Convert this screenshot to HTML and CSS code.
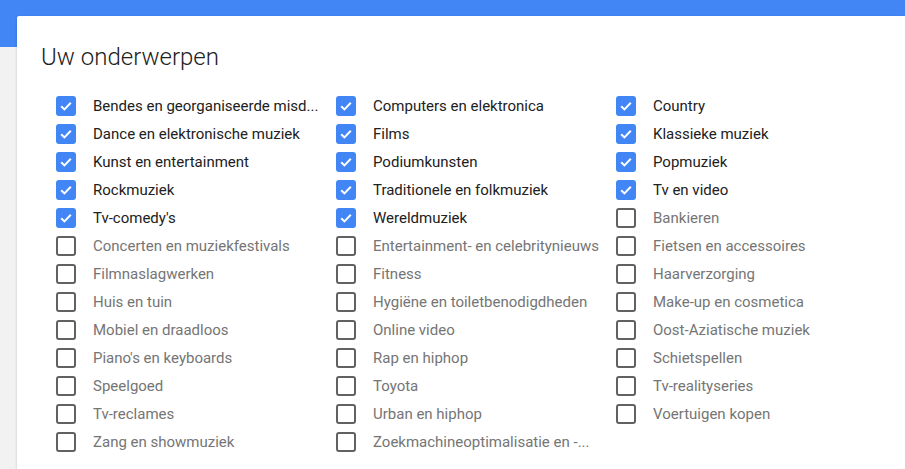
FILE: index.html
```html
<!DOCTYPE html>
<html lang="nl">
<head>
<meta charset="utf-8">
<title>Uw onderwerpen</title>
<link rel="stylesheet" href="styles.css">
</head>
<body>
<div class="topbar"></div>
<main class="page">
  <section class="card">
    <h1 class="title">Uw onderwerpen</h1>
    <ul class="topics">
      <li class="topic on"><span class="box"><svg viewBox="0 0 18 18"><path d="M4.2 9.2l3.2 3.2 6.4-6.6"/></svg></span><span class="label">Bendes en georganiseerde misd...</span></li>
      <li class="topic on"><span class="box"><svg viewBox="0 0 18 18"><path d="M4.2 9.2l3.2 3.2 6.4-6.6"/></svg></span><span class="label">Dance en elektronische muziek</span></li>
      <li class="topic on"><span class="box"><svg viewBox="0 0 18 18"><path d="M4.2 9.2l3.2 3.2 6.4-6.6"/></svg></span><span class="label">Kunst en entertainment</span></li>
      <li class="topic on"><span class="box"><svg viewBox="0 0 18 18"><path d="M4.2 9.2l3.2 3.2 6.4-6.6"/></svg></span><span class="label">Rockmuziek</span></li>
      <li class="topic on"><span class="box"><svg viewBox="0 0 18 18"><path d="M4.2 9.2l3.2 3.2 6.4-6.6"/></svg></span><span class="label">Tv-comedy's</span></li>
      <li class="topic"><span class="box"></span><span class="label">Concerten en muziekfestivals</span></li>
      <li class="topic"><span class="box"></span><span class="label">Filmnaslagwerken</span></li>
      <li class="topic"><span class="box"></span><span class="label">Huis en tuin</span></li>
      <li class="topic"><span class="box"></span><span class="label">Mobiel en draadloos</span></li>
      <li class="topic"><span class="box"></span><span class="label">Piano's en keyboards</span></li>
      <li class="topic"><span class="box"></span><span class="label">Speelgoed</span></li>
      <li class="topic"><span class="box"></span><span class="label">Tv-reclames</span></li>
      <li class="topic"><span class="box"></span><span class="label">Zang en showmuziek</span></li>

      <li class="topic on"><span class="box"><svg viewBox="0 0 18 18"><path d="M4.2 9.2l3.2 3.2 6.4-6.6"/></svg></span><span class="label">Computers en elektronica</span></li>
      <li class="topic on"><span class="box"><svg viewBox="0 0 18 18"><path d="M4.2 9.2l3.2 3.2 6.4-6.6"/></svg></span><span class="label">Films</span></li>
      <li class="topic on"><span class="box"><svg viewBox="0 0 18 18"><path d="M4.2 9.2l3.2 3.2 6.4-6.6"/></svg></span><span class="label">Podiumkunsten</span></li>
      <li class="topic on"><span class="box"><svg viewBox="0 0 18 18"><path d="M4.2 9.2l3.2 3.2 6.4-6.6"/></svg></span><span class="label">Traditionele en folkmuziek</span></li>
      <li class="topic on"><span class="box"><svg viewBox="0 0 18 18"><path d="M4.2 9.2l3.2 3.2 6.4-6.6"/></svg></span><span class="label">Wereldmuziek</span></li>
      <li class="topic"><span class="box"></span><span class="label">Entertainment- en celebritynieuws</span></li>
      <li class="topic"><span class="box"></span><span class="label">Fitness</span></li>
      <li class="topic"><span class="box"></span><span class="label">Hygiëne en toiletbenodigdheden</span></li>
      <li class="topic"><span class="box"></span><span class="label">Online video</span></li>
      <li class="topic"><span class="box"></span><span class="label">Rap en hiphop</span></li>
      <li class="topic"><span class="box"></span><span class="label">Toyota</span></li>
      <li class="topic"><span class="box"></span><span class="label">Urban en hiphop</span></li>
      <li class="topic"><span class="box"></span><span class="label">Zoekmachineoptimalisatie en -...</span></li>

      <li class="topic on"><span class="box"><svg viewBox="0 0 18 18"><path d="M4.2 9.2l3.2 3.2 6.4-6.6"/></svg></span><span class="label">Country</span></li>
      <li class="topic on"><span class="box"><svg viewBox="0 0 18 18"><path d="M4.2 9.2l3.2 3.2 6.4-6.6"/></svg></span><span class="label">Klassieke muziek</span></li>
      <li class="topic on"><span class="box"><svg viewBox="0 0 18 18"><path d="M4.2 9.2l3.2 3.2 6.4-6.6"/></svg></span><span class="label">Popmuziek</span></li>
      <li class="topic on"><span class="box"><svg viewBox="0 0 18 18"><path d="M4.2 9.2l3.2 3.2 6.4-6.6"/></svg></span><span class="label">Tv en video</span></li>
      <li class="topic"><span class="box"></span><span class="label">Bankieren</span></li>
      <li class="topic"><span class="box"></span><span class="label">Fietsen en accessoires</span></li>
      <li class="topic"><span class="box"></span><span class="label">Haarverzorging</span></li>
      <li class="topic"><span class="box"></span><span class="label">Make-up en cosmetica</span></li>
      <li class="topic"><span class="box"></span><span class="label">Oost-Aziatische muziek</span></li>
      <li class="topic"><span class="box"></span><span class="label">Schietspellen</span></li>
      <li class="topic"><span class="box"></span><span class="label">Tv-realityseries</span></li>
      <li class="topic"><span class="box"></span><span class="label">Voertuigen kopen</span></li>
    </ul>
  </section>
</main>
</body>
</html>
```
FILE: styles.css
```css
html, body {
  margin: 0;
  padding: 0;
  background: #f2f2f2;
  font-family: Roboto, "Noto Sans", Arial, sans-serif;
  overflow: hidden;
}

.topbar {
  height: 47px;
  background: #4285f4;
}

.page {
  margin-top: -31px;
  padding-left: 17px;
}

.card {
  background: #ffffff;
  border-radius: 2px 0 0 0;
  box-shadow: 0 1px 3px rgba(0, 0, 0, 0.18);
  padding: 25px 0 13px 24px;
}

.title {
  margin: 0;
  font-size: 24px;
  line-height: 32px;
  font-weight: 300;
  color: #212121;
}

.topics {
  list-style: none;
  margin: 19px 0 0 0;
  padding: 0 0 0 15px;
  display: grid;
  grid-auto-flow: column;
  grid-template-rows: repeat(13, 28px);
  grid-template-columns: repeat(3, 280px);
}

.topic {
  display: flex;
  align-items: center;
  height: 28px;
  white-space: nowrap;
}

.box {
  box-sizing: border-box;
  width: 20px;
  height: 20px;
  border: 2px solid #616161;
  border-radius: 3px;
  flex: none;
  margin-right: 17px;
  display: flex;
  align-items: center;
  justify-content: center;
}

.topic.on .box {
  background: #4285f4;
  border-color: #4285f4;
}

.box svg {
  width: 18px;
  height: 18px;
  flex: none;
}

.box svg path {
  fill: none;
  stroke: #ffffff;
  stroke-width: 2;
}

.label {
  font-size: 15px;
  color: #757575;
}

.topic.on .label {
  color: #212121;
}
```
